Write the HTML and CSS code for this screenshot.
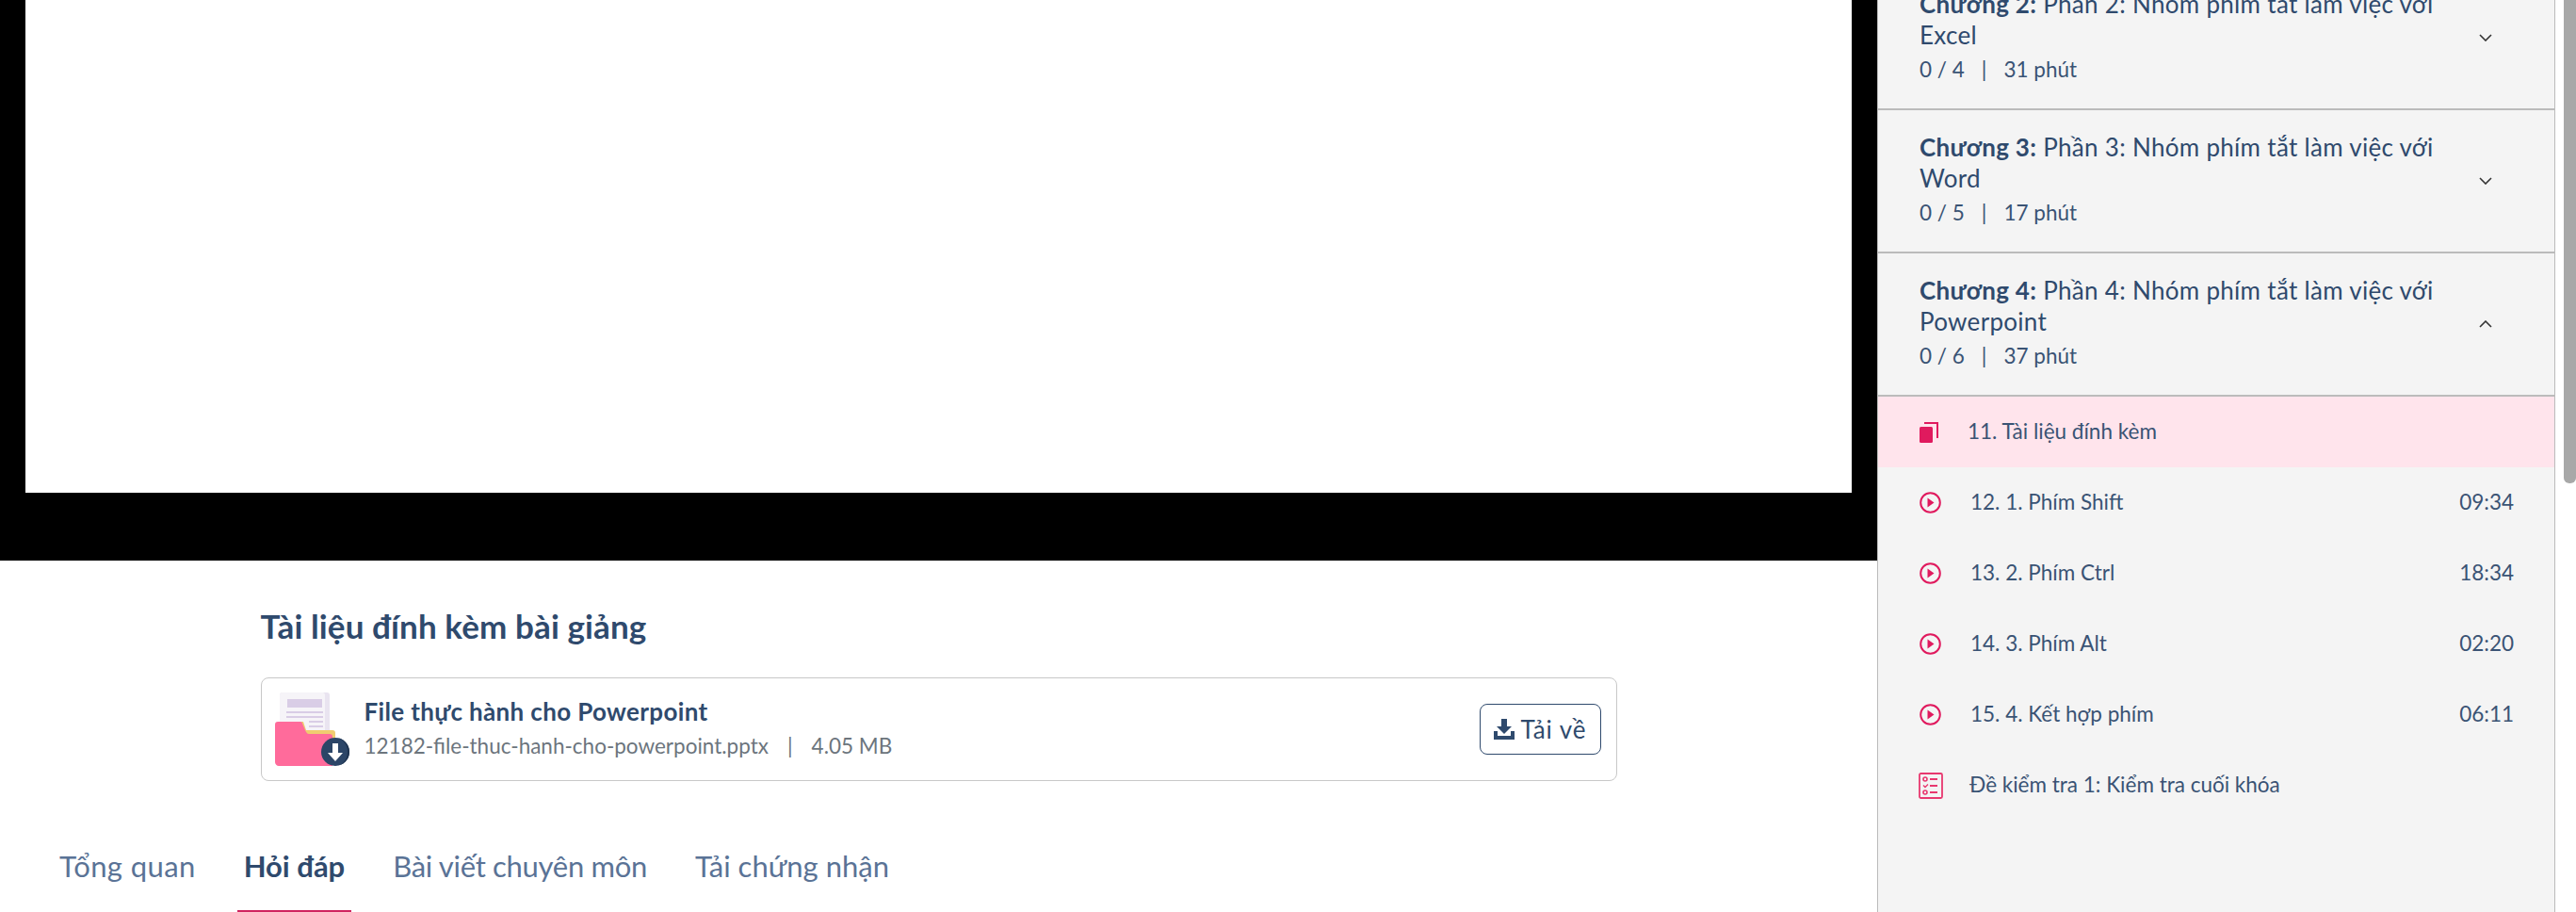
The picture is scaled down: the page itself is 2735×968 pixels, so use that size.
FILE: index.html
```html
<!DOCTYPE html>
<html lang="vi">
<head>
  <meta charset="UTF-8">
  <link rel="stylesheet" href="styles.css">
</head>
<body>
<div class="page">

  <!-- cột trái: video + nội dung -->
  <main class="main">
    <div class="video">
      <div class="video-frame"></div>
    </div>

    <section class="attach">
      <h2 class="attach-title">Tài liệu đính kèm bài giảng</h2>
      <div class="file-card">
        <svg class="file-icon" viewBox="0 0 80 80" width="80" height="80">
          <rect x="5" y="1" width="53" height="62" rx="3" fill="#e9e4f0"/>
          <rect x="5" y="1" width="48" height="62" rx="3" fill="#f6f4f8"/>
          <rect x="13" y="8" width="37" height="9" fill="#d9cde6"/>
          <rect x="12" y="21" width="39" height="2" fill="#d9cde6"/>
          <rect x="12" y="26" width="39" height="2" fill="#d9cde6"/>
          <rect x="36" y="31" width="15" height="2" fill="#d9cde6"/>
          <rect x="36" y="36" width="15" height="2" fill="#d9cde6"/>
          <path d="M27 32h3l3 9h28c2 0 3 1 3 3v30H27z" fill="#f0cc70"/>
          <path d="M3 32h24c1 0 2 1 2 2l3 7c1 2 2 4 4 4h22c2 0 3 1 3 3v31H4c-2 0-4-2-4-4V35c0-2 1-3 3-3z" fill="#ff6b9b"/>
          <circle cx="64" cy="64" r="15" fill="#2b4567"/>
          <path d="M64 49a15 15 0 0 1 0 30 13 15 0 0 0 0-30z" fill="#1d3350"/>
          <path d="M61 55h6v10h5l-8 9-8-9h5z" fill="#fff"/>
        </svg>
        <div class="file-info">
          <div class="file-name">File thực hành cho Powerpoint</div>
          <div class="file-meta"><span>12182-file-thuc-hanh-cho-powerpoint.pptx</span><span class="sep">|</span><span>4.05 MB</span></div>
        </div>
        <button class="btn-download">
          <svg viewBox="0 0 22 22" width="22" height="22">
            <path d="M8 0h6v8h5l-8 8-8-8h5z" fill="#2f4a6d"/>
            <path d="M0 13h4v5h14v-5h4v9H0z" fill="#2f4a6d"/>
          </svg>
          Tải về
        </button>
      </div>
    </section>

    <nav class="tabs">
      <a class="tab tab-wide">Tổng quan</a>
      <a class="tab active">Hỏi đáp</a>
      <a class="tab tab-narrow">Bài viết chuyên môn</a>
      <a class="tab">Tải chứng nhận</a>
    </nav>
  </main>

  <!-- cột phải: danh sách chương -->
  <aside class="sidebar">
    <div class="chapter first">
      <div class="chapter-text">
        <div class="chapter-title"><b>Chương 2:</b> Phần 2: Nhóm phím tắt làm việc với Excel</div>
        <div class="chapter-meta"><span>0 / 4</span><span class="sep">|</span><span>31 phút</span></div>
      </div>
      <svg class="chevron" viewBox="0 0 14 8" width="14" height="8"><path d="M1 1l6 6 6-6" fill="none" stroke="#333" stroke-width="1.6"/></svg>
    </div>
    <div class="chapter">
      <div class="chapter-text">
        <div class="chapter-title"><b>Chương 3:</b> Phần 3: Nhóm phím tắt làm việc với Word</div>
        <div class="chapter-meta"><span>0 / 5</span><span class="sep">|</span><span>17 phút</span></div>
      </div>
      <svg class="chevron" viewBox="0 0 14 8" width="14" height="8"><path d="M1 1l6 6 6-6" fill="none" stroke="#333" stroke-width="1.6"/></svg>
    </div>
    <div class="chapter">
      <div class="chapter-text">
        <div class="chapter-title"><b>Chương 4:</b> Phần 4: Nhóm phím tắt làm việc với Powerpoint</div>
        <div class="chapter-meta"><span>0 / 6</span><span class="sep">|</span><span>37 phút</span></div>
      </div>
      <svg class="chevron" viewBox="0 0 14 8" width="14" height="8"><path d="M1 7l6-6 6 6" fill="none" stroke="#333" stroke-width="1.6"/></svg>
    </div>

    <ul class="lessons">
      <li class="lesson current">
        <svg class="lesson-icon" viewBox="0 0 20 22" width="20" height="22">
          <rect x="0" y="5" width="14" height="17" rx="1.5" fill="#e01a5e"/>
          <path d="M5 1h14v16" fill="none" stroke="#e01a5e" stroke-width="2"/>
        </svg>
        <span class="lesson-name">11. Tài liệu đính kèm</span>
      </li>
      <li class="lesson">
        <svg class="lesson-icon" viewBox="0 0 23 23" width="23" height="23">
          <circle cx="11.5" cy="11.5" r="10.3" fill="none" stroke="#e01a5e" stroke-width="2"/>
          <path d="M8.5 6.5l7 5-7 5z" fill="#e01a5e"/>
        </svg>
        <span class="lesson-name">12. 1. Phím Shift</span>
        <span class="lesson-time">09:34</span>
      </li>
      <li class="lesson">
        <svg class="lesson-icon" viewBox="0 0 23 23" width="23" height="23">
          <circle cx="11.5" cy="11.5" r="10.3" fill="none" stroke="#e01a5e" stroke-width="2"/>
          <path d="M8.5 6.5l7 5-7 5z" fill="#e01a5e"/>
        </svg>
        <span class="lesson-name">13. 2. Phím Ctrl</span>
        <span class="lesson-time">18:34</span>
      </li>
      <li class="lesson">
        <svg class="lesson-icon" viewBox="0 0 23 23" width="23" height="23">
          <circle cx="11.5" cy="11.5" r="10.3" fill="none" stroke="#e01a5e" stroke-width="2"/>
          <path d="M8.5 6.5l7 5-7 5z" fill="#e01a5e"/>
        </svg>
        <span class="lesson-name">14. 3. Phím Alt</span>
        <span class="lesson-time">02:20</span>
      </li>
      <li class="lesson">
        <svg class="lesson-icon" viewBox="0 0 23 23" width="23" height="23">
          <circle cx="11.5" cy="11.5" r="10.3" fill="none" stroke="#e01a5e" stroke-width="2"/>
          <path d="M8.5 6.5l7 5-7 5z" fill="#e01a5e"/>
        </svg>
        <span class="lesson-name">15. 4. Kết hợp phím</span>
        <span class="lesson-time">06:11</span>
      </li>
      <li class="lesson exam">
        <svg class="lesson-icon" viewBox="0 0 26 28" width="26" height="28">
          <rect x="1" y="1" width="24" height="26" rx="1.5" fill="none" stroke="#e8386f" stroke-width="1.8"/>
          <circle cx="7" cy="7" r="2" fill="none" stroke="#e8386f" stroke-width="1.6"/>
          <path d="M12 7h8M12 14h8M12 21h8" stroke="#e8386f" stroke-width="1.8"/>
          <path d="M5 13.5l2 2 3-3" fill="none" stroke="#e8386f" stroke-width="1.4"/>
          <circle cx="7" cy="21" r="2" fill="none" stroke="#e8386f" stroke-width="1.6"/>
        </svg>
        <span class="lesson-name">Đề kiểm tra 1: Kiểm tra cuối khóa</span>
      </li>
    </ul>
  </aside>

  <!-- thanh cuộn -->
  <div class="scrollbar"><div class="scroll-thumb"></div></div>
</div>
</body>
</html>
```

FILE: styles.css
```css
/* reset */
* { margin: 0; padding: 0; box-sizing: border-box; }
html, body { height: 968px; overflow: hidden; }
body {
  font-family: "Lato", "Noto Sans", sans-serif;
  background: #fff;
  color: #2f4a6d;
}

.page {
  display: flex;
  height: 968px;
  overflow: hidden;
}

/* cột trái */
.main {
  width: 1993px;
  flex: none;
}
.video {
  background: #000;
  height: 595px;
  padding: 0 27px 72px;
}
.video-frame {
  background: #fff;
  height: 100%;
}

/* tài liệu đính kèm */
.attach {
  width: 1440px;
  margin: 0 auto;
  padding-top: 49px;
}
.attach-title {
  font-size: 35px;
  line-height: 40px;
  font-weight: 700;
  letter-spacing: 0.1px;
  color: #2f4a6d;
  margin-bottom: 35px;
}
.file-card {
  display: flex;
  align-items: center;
  height: 110px;
  border: 1px solid #c8c8c8;
  border-radius: 8px;
  padding: 0 16px 0 14px;
}
.file-icon { flex: none; }
.file-info {
  flex: 1;
  margin-left: 15px;
  padding-bottom: 3px;
}
.file-name {
  font-size: 26px;
  line-height: 36px;
  font-weight: 700;
  letter-spacing: 0.35px;
}
.file-meta {
  font-size: 22.5px;
  line-height: 32px;
  color: #6c757d;
  margin-top: 3px;
}
.sep { margin: 0 20px; }
.btn-download {
  display: flex;
  align-items: center;
  gap: 7px;
  width: 129px;
  height: 54px;
  padding-left: 14px;
  background: #fff;
  border: 1px solid #2f4a6d;
  border-radius: 8px;
  font-family: inherit;
  font-size: 26px;
  letter-spacing: 0.9px;
  color: #2f4a6d;
}

/* tabs */
.tabs {
  display: flex;
  gap: 37px;
  margin-top: 65px;
  padding-left: 56px;
}
.tab {
  padding: 0 7px 22px;
  font-size: 31px;
  line-height: 50px;
  color: #5a7396;
  border-bottom: 2px solid transparent;
}
.tab-wide { letter-spacing: 0.4px; }
.tab-narrow { letter-spacing: -0.3px; }
.tab.active {
  color: #2f4a6d;
  font-weight: 700;
  border-bottom-color: #d0245f;
}

/* cột phải */
.sidebar {
  width: 720px;
  flex: none;
  background: #f4f4f4;
  border-left: 1px solid #bbb;
  border-right: 1px solid #bbb;
}
.chapter {
  display: flex;
  align-items: center;
  justify-content: space-between;
  padding: 23px 66px 26px 44px;
  border-bottom: 2px solid #bbb;
}
.chapter.first { margin-top: -35px; }
.chapter-text { width: 560px; }
.chapter-title {
  font-size: 26px;
  line-height: 33px;
  letter-spacing: 0.3px;
}
.chapter-title b { font-weight: 700; }
.chapter-meta {
  font-size: 22.5px;
  line-height: 30px;
  margin-top: 5px;
  color: #3a5374;
}
.chapter-meta .sep { margin: 0 18px; }
.chevron {
  flex: none;
  margin-top: 3px;
}

.lessons { list-style: none; }
.lesson {
  display: flex;
  align-items: center;
  height: 75px;
  padding: 0 43px 0 44px;
  font-size: 22.5px;
  color: #3a5374;
}
.lesson.current { background: #ffe4ec; }
.lesson-icon {
  flex: none;
  margin-right: 31px;
}
.lesson.exam .lesson-icon { margin-right: 28px; margin-left: -1px; }
.lesson-name { flex: 1; padding-bottom: 2px; }
.lesson-time { flex: none; padding-bottom: 2px; }

/* thanh cuộn */
.scrollbar {
  flex: 1;
  padding-left: 9px;
  background: #fff;
}
.scroll-thumb {
  height: 513px;
  background: #a8a8a8;
  border-radius: 0 0 6px 6px;
}
```
